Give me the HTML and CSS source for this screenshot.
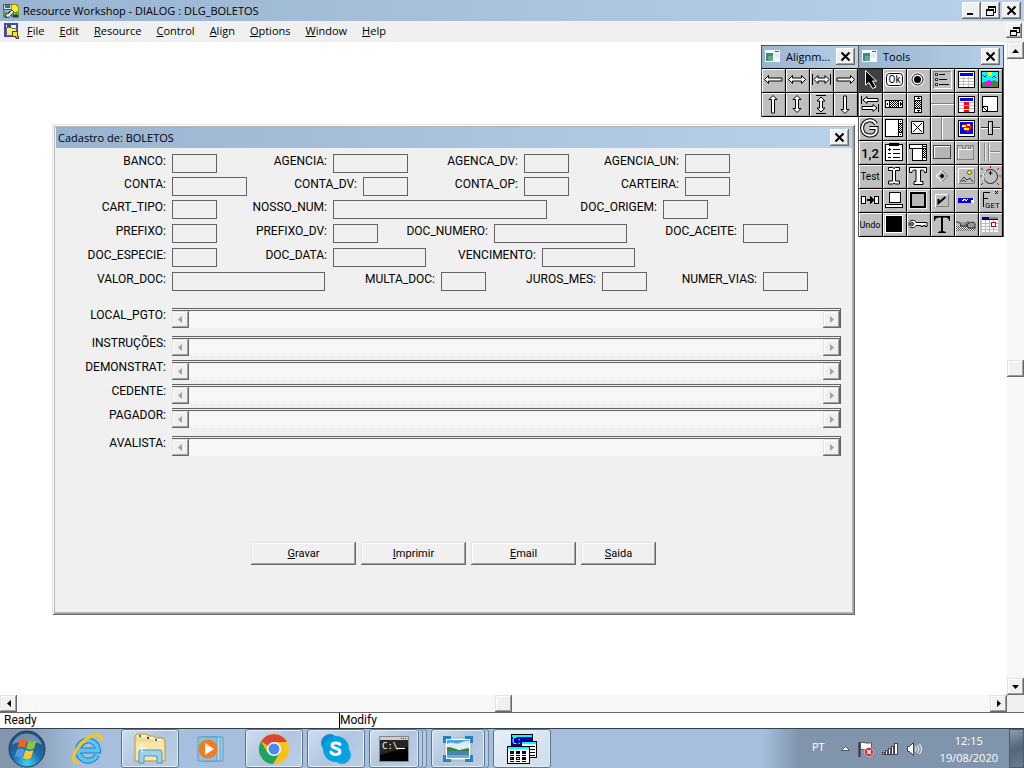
FILE: index.html
```html
<!DOCTYPE html>
<html lang="pt">
  <head>
    <meta charset="utf-8" />
    <meta name="viewport" content="width=device-width, initial-scale=1" />
    <title>Resource Workshop - DIALOG : DLG_BOLETOS</title>
    <link rel="stylesheet" href="styles.css">
  </head>
  <body>
    <header class="titlebar">
      <svg class="app-icon" width="16" height="16" viewBox="0 0 16 16" shape-rendering="crispEdges">
        <path d="M0 1h9v5H0z" fill="#ddd" stroke="#555"/><path d="M2 2h5v3H2z" fill="#0a8a8a"/>
        <path d="M8 1h5l2 3v4l-3 2-4-3z" fill="#ffef20" stroke="#998c00"/>
        <path d="M0 7l5 3 3-3 3 4 5-2v6H9l-2-3-3 3H0z" fill="#4a9c4a"/>
        <path d="M2 13l7-6 2 2-6 6z" fill="#e8e8e8" stroke="#444"/><path d="M10 12h5v2h-5z" fill="#333"/>
      </svg>
      <h1>Resource Workshop - DIALOG : DLG_BOLETOS</h1>
      <div class="window-buttons">
        <button class="win-btn" aria-label="Minimize"><svg width="13" height="11"><path d="M2 9h6" stroke="#000" stroke-width="2"/></svg></button>
        <button class="win-btn" aria-label="Restore"><svg width="13" height="11" shape-rendering="crispEdges"><path d="M4 1h7v6H9M4 1v3M4 2h7M2 4h7v6H2zM2 5h7" fill="none" stroke="#000"/></svg></button>
        <button class="win-btn win-close" aria-label="Close"><svg width="13" height="11"><path d="M2.500 1.500l8 8M10.500 1.500l-8 8" stroke="#000" stroke-width="2"/></svg></button>
      </div>
    </header>

    <nav class="menubar">
      <svg class="app-icon" width="16" height="16" viewBox="0 0 16 16" shape-rendering="crispEdges">
        <path d="M1 1h12v12H1z" fill="#fff" stroke="#4040e0" stroke-width="2"/>
        <path d="M2 4h5l1 1h4v7H2z" fill="#f5ee6a" stroke="#666"/><path d="M3 3h4" stroke="#080" stroke-width="2"/>
        <path d="M8 8h5v4l2 3-2 1-2-3-2 1z" fill="#ffe600" stroke="#444"/>
      </svg>
      <a href="#"><u>F</u>ile</a>
      <a href="#"><u>E</u>dit</a>
      <a href="#"><u>R</u>esource</a>
      <a href="#"><u>C</u>ontrol</a>
      <a href="#"><u>A</u>lign</a>
      <a href="#"><u>O</u>ptions</a>
      <a href="#"><u>W</u>indow</a>
      <a href="#"><u>H</u>elp</a>
      <button class="win-btn mdi-restore" aria-label="Restore window"><svg width="11" height="10" shape-rendering="crispEdges"><path d="M4 1h6v5H8M4 1v2M4 2h6M1 4h6v5H1zM1 5h6" fill="none" stroke="#000"/></svg></button>
    </nav>

    <main class="workspace">
      <div class="canvas">
        <section class="dialog">
          <div class="dialog-title">
            <h2>Cadastro de: BOLETOS</h2>
            <button class="win-btn win-close" aria-label="Close"><svg width="13" height="11"><path d="M2.500 1.500l8 8M10.500 1.500l-8 8" stroke="#000" stroke-width="2"/></svg></button>
          </div>
          <form class="dialog-form">
            <div class="row row-tight">
              <label for="banco">BANCO:</label><input id="banco" class="w-s">
              <label for="agencia">AGENCIA:</label><input id="agencia" class="w-m">
              <label for="agenca_dv">AGENCA_DV:</label><input id="agenca_dv" class="w-s">
              <label for="agencia_un">AGENCIA_UN:</label><input id="agencia_un" class="w-s">
            </div>
            <div class="row row-tight">
              <label for="conta">CONTA:</label><input id="conta" class="w-m">
              <label for="conta_dv">CONTA_DV:</label><input id="conta_dv" class="w-s">
              <label for="conta_op">CONTA_OP:</label><input id="conta_op" class="w-s">
              <label for="carteira">CARTEIRA:</label><input id="carteira" class="w-s">
            </div>
            <div class="row">
              <label for="cart_tipo">CART_TIPO:</label><input id="cart_tipo" class="w-s">
              <label for="nosso_num">NOSSO_NUM:</label><input id="nosso_num" class="w-xxl">
              <label for="doc_origem">DOC_ORIGEM:</label><input id="doc_origem" class="w-s">
            </div>
            <div class="row">
              <label for="prefixo">PREFIXO:</label><input id="prefixo" class="w-s">
              <label for="prefixo_dv">PREFIXO_DV:</label><input id="prefixo_dv" class="w-s">
              <label for="doc_numero">DOC_NUMERO:</label><input id="doc_numero" class="w-l">
              <label for="doc_aceite">DOC_ACEITE:</label><input id="doc_aceite" class="w-s">
            </div>
            <div class="row">
              <label for="doc_especie">DOC_ESPECIE:</label><input id="doc_especie" class="w-s">
              <label for="doc_data">DOC_DATA:</label><input id="doc_data" class="w-date">
              <label for="vencimento">VENCIMENTO:</label><input id="vencimento" class="w-date">
            </div>
            <div class="row">
              <label for="valor_doc">VALOR_DOC:</label><input id="valor_doc" class="w-xl">
              <label for="multa_doc">MULTA_DOC:</label><input id="multa_doc" class="w-s">
              <label for="juros_mes">JUROS_MES:</label><input id="juros_mes" class="w-s">
              <label for="numer_vias">NUMER_VIAS:</label><input id="numer_vias" class="w-s">
            </div>

            <div class="memos">
              <div class="memo-row memo-spaced">
                <label for="local_pgto">LOCAL_PGTO:</label>
                <div class="memo"><button type="button" class="sb-btn off" aria-label="Left"><svg width="5" height="7"><path d="M4 0v7L0 3.500z"/></svg></button><input id="local_pgto"><button type="button" class="sb-btn off" aria-label="Right"><svg width="5" height="7"><path d="M1 0v7L5 3.500z"/></svg></button></div>
              </div>
              <div class="memo-row">
                <label for="instrucoes">INSTRUÇÕES:</label>
                <div class="memo"><button type="button" class="sb-btn off" aria-label="Left"><svg width="5" height="7"><path d="M4 0v7L0 3.500z"/></svg></button><input id="instrucoes"><button type="button" class="sb-btn off" aria-label="Right"><svg width="5" height="7"><path d="M1 0v7L5 3.500z"/></svg></button></div>
              </div>
              <div class="memo-row">
                <label for="demonstrat">DEMONSTRAT:</label>
                <div class="memo"><button type="button" class="sb-btn off" aria-label="Left"><svg width="5" height="7"><path d="M4 0v7L0 3.500z"/></svg></button><input id="demonstrat"><button type="button" class="sb-btn off" aria-label="Right"><svg width="5" height="7"><path d="M1 0v7L5 3.500z"/></svg></button></div>
              </div>
              <div class="memo-row">
                <label for="cedente">CEDENTE:</label>
                <div class="memo"><button type="button" class="sb-btn off" aria-label="Left"><svg width="5" height="7"><path d="M4 0v7L0 3.500z"/></svg></button><input id="cedente"><button type="button" class="sb-btn off" aria-label="Right"><svg width="5" height="7"><path d="M1 0v7L5 3.500z"/></svg></button></div>
              </div>
              <div class="memo-row memo-spaced">
                <label for="pagador">PAGADOR:</label>
                <div class="memo"><button type="button" class="sb-btn off" aria-label="Left"><svg width="5" height="7"><path d="M4 0v7L0 3.500z"/></svg></button><input id="pagador"><button type="button" class="sb-btn off" aria-label="Right"><svg width="5" height="7"><path d="M1 0v7L5 3.500z"/></svg></button></div>
              </div>
              <div class="memo-row">
                <label for="avalista">AVALISTA:</label>
                <div class="memo"><button type="button" class="sb-btn off" aria-label="Left"><svg width="5" height="7"><path d="M4 0v7L0 3.500z"/></svg></button><input id="avalista"><button type="button" class="sb-btn off" aria-label="Right"><svg width="5" height="7"><path d="M1 0v7L5 3.500z"/></svg></button></div>
              </div>
            </div>

            <div class="actions">
              <button type="button" class="push"><span><u>G</u>ravar</span></button>
              <button type="button" class="push"><span><u>I</u>mprimir</span></button>
              <button type="button" class="push"><span><u>E</u>mail</span></button>
              <button type="button" class="push push-small"><span><u>S</u>aida</span></button>
            </div>
          </form>
        </section>

        <section class="palette palette-align">
          <div class="palette-title">
            <svg width="15" height="12" viewBox="0 0 15 12" shape-rendering="crispEdges"><path d="M0 0h15v12H0z" fill="#f8fbff"/><path d="M1 3h7v8H1z" fill="#3a8a8a"/><path d="M3 6h5v5H3z" fill="#5fae7a"/><path d="M9 3h5v5H9z" fill="#dcecf8"/><path d="M10 1h4v1h-4z" fill="#456"/></svg>
            <h2>Alignm...</h2>
            <button class="win-btn win-close" aria-label="Close"><svg width="13" height="11"><path d="M2.500 1.500l8 8M10.500 1.500l-8 8" stroke="#000" stroke-width="2"/></svg></button>
          </div>
          <div class="cells cells-4">
            <button aria-label="Left"><svg viewBox="0 0 24 24" class="arrow"><path d="M2.500 10.500l4-4v2.500H20v3H6.500v2.500z"/></svg></button>
            <button aria-label="Center horizontally"><svg viewBox="0 0 24 24" class="arrow"><path d="M2.500 10.500l4-4v2.500h9V6.500l4 4-4 4V12h-9v2.500z"/></svg></button>
            <button aria-label="Same width"><svg viewBox="0 0 24 24" class="arrow"><path d="M4 10.500l4-4v2.500h7V6.500l4 4-4 4V12H8v2.500zM2.500 5v11M20.500 5v11"/></svg></button>
            <button aria-label="Right"><svg viewBox="0 0 24 24" class="arrow"><path d="M20.500 10.500l-4-4v2.500H3v3h13.500v2.500z"/></svg></button>
            <button aria-label="Top"><svg viewBox="0 0 24 24" class="arrow"><path d="M11 2.500l4 4h-2.500V20h-3V6.500H7z"/></svg></button>
            <button aria-label="Center vertically"><svg viewBox="0 0 24 24" class="arrow"><path d="M11 2.500l4 4h-2.500v9H15l-4 4-4-4h2.500v-9H7z"/></svg></button>
            <button aria-label="Same height"><svg viewBox="0 0 24 24" class="arrow"><path d="M11 4l4 4h-2.500v7H15l-4 4-4-4h2.500V8H7zM6 2.500h10M6 20.500h10"/></svg></button>
            <button aria-label="Bottom"><svg viewBox="0 0 24 24" class="arrow"><path d="M11 20.500l4-4h-2.500V3h-3v13.500H7z"/></svg></button>
          </div>
        </section>

        <section class="palette palette-tools">
          <div class="palette-title">
            <svg width="15" height="12" viewBox="0 0 15 12" shape-rendering="crispEdges"><path d="M0 0h15v12H0z" fill="#f8fbff"/><path d="M1 3h7v8H1z" fill="#3a8a8a"/><path d="M3 6h5v5H3z" fill="#5fae7a"/><path d="M9 3h5v5H9z" fill="#dcecf8"/><path d="M10 1h4v1h-4z" fill="#456"/></svg>
            <h2>Tools</h2>
            <button class="win-btn win-close" aria-label="Close"><svg width="13" height="11"><path d="M2.500 1.500l8 8M10.500 1.500l-8 8" stroke="#000" stroke-width="2"/></svg></button>
          </div>
          <div class="cells cells-6">
            <button class="selected" aria-label="Select"><svg viewBox="0 0 24 24"><path d="M6.500 1.500v14.500l3.500-2.500 3.500 6 3.500-1.500-3.500-6h4z" fill="#000" stroke="#fff"/></svg></button>
            <button aria-label="Push button"><svg viewBox="0 0 24 24"><rect x="2" y="3" width="19" height="15" rx="4" fill="#fff"/><rect x="3.500" y="4.500" width="16" height="12" rx="3" fill="#fff" stroke="#000"/><text x="11.500" y="14" text-anchor="middle" font-size="10">Ok</text></svg></button>
            <button aria-label="Radio button"><svg viewBox="0 0 24 24"><circle cx="10.500" cy="10.500" r="7" fill="#fff"/><circle cx="10.500" cy="10.500" r="5.500" fill="#fff" stroke="#000"/><circle cx="10.500" cy="10.500" r="3.500"/></svg></button>
            <button aria-label="Radio group"><svg viewBox="0 0 24 24" class="px"><path d="M2.500 19V2.500H20" fill="none" stroke="#808080"/><path d="M3 19.500h17.500V2" fill="none" stroke="#fff"/><path d="M8 5.500h6M8 10.500h8M8 15.500h10" stroke="#000"/><path d="M4.500 4.500h2v2h-2zM4.500 9.500h2v2h-2zM4.500 14.500h2v2h-2z" fill="#fff" stroke="#333"/></svg></button>
            <button aria-label="Table"><svg viewBox="0 0 24 24" class="px"><path d="M3.500 2.500h16v16h-16z" fill="#fff" stroke="#000"/><path d="M5 4h13v3H5z" fill="#00f"/><path d="M4 9.500h15M4 12.500h15M4 15.500h15M8.500 8v10M13.500 8v10" stroke="#c0c0c0"/></svg></button>
            <button aria-label="Picture"><svg viewBox="0 0 24 24" class="px"><path d="M2.500 2.500h17v16h-17z" fill="#0ff" stroke="#000"/><path d="M3 14l4-2 4 1 4-2 4 2v5H3z" fill="#5a7a30"/><path d="M9 3h4v4H9z" fill="#ff0"/><path d="M7 14l3-4 3 4v2H7z" fill="#f0f"/><path d="M4 6l2 2 2-2M13 9l2-2 2 2" fill="none" stroke="#00f"/></svg></button>

            <button aria-label="Spin"><svg viewBox="0 0 24 24" class="arrow"><path d="M4 7l4-3.500V5.500h11v3H8v2zM2.500 3v8M18 15l-4-3.500v2H3v3h11v2zM19.500 11v8"/></svg></button>
            <button aria-label="Horizontal scroll bar"><svg viewBox="0 0 24 24" class="px"><path d="M2.500 7.500h17v7h-17z" fill="#fff" stroke="#000"/><path d="M7 8h8v6H7z" fill="url(#hatch)"/><path d="M6.500 8v6M15.500 8v6" stroke="#000"/><path d="M5 9v4l-2-2zM17 9v4l2-2z"/></svg></button>
            <button aria-label="Vertical scroll bar"><svg viewBox="0 0 24 24" class="px"><path d="M7.500 3.500h7v16h-7z" fill="#fff" stroke="#000"/><path d="M8 8h6v7H8z" fill="url(#hatch)"/><path d="M8 7.500h6M8 15.500h6" stroke="#000"/><path d="M9 6h4l-2-2zM9 17h4l-2 2z"/></svg></button>
            <button aria-label="Horizontal line"><svg viewBox="0 0 24 24" class="px"><path d="M0 10.500h23" stroke="#808080"/><path d="M0 11.500h23" stroke="#fff"/></svg></button>
            <button aria-label="Column table"><svg viewBox="0 0 24 24" class="px"><path d="M3.500 3.500h16v16h-16z" fill="#fff" stroke="#000"/><path d="M4 9.500h15M4 12.500h15M4 15.500h15" stroke="#c0c0c0"/><path d="M5 5h13v3H5z" fill="#00f"/><path d="M11.500 9v10" stroke="#f00" stroke-width="5" stroke-dasharray="3 1"/></svg></button>
            <button aria-label="Page"><svg viewBox="0 0 24 24" class="px"><path d="M3.500 3.500h15v15h-15z" fill="#fff" stroke="#000"/><path d="M3.500 13.500l5 5M3.500 13.500h5v5" fill="none" stroke="#000"/></svg></button>

            <button aria-label="Group"><svg viewBox="0 0 24 24"><path d="M17 7C15 4 12 3 9.500 3.500 1 5 1 17 9.500 18.500c4 .5 7-1.500 8-4V11h-7" fill="none" stroke="#000" stroke-width="4"/><path d="M17 7C15 4 12 3 9.500 3.500 1 5 1 17 9.500 18.500c4 .5 7-1.500 8-4V11h-7" fill="none" stroke="#fff" stroke-width="2"/></svg></button>
            <button aria-label="List box"><svg viewBox="0 0 24 24" class="px"><path d="M2.500 2.500h17v17h-17z" fill="#fff" stroke="#000"/><path d="M16 7h3v8h-3z" fill="url(#hatch)"/><path d="M15.500 3v16M16 6.500h3M16 15.500h3M17 4.500h1M17 17.500h1" stroke="#000"/></svg></button>
            <button aria-label="Check box"><svg viewBox="0 0 24 24"><path d="M4.500 4.500h12v12h-12z" fill="#fff" stroke="#000"/><path d="M6 6l9 9M15 6l-9 9" stroke="#000"/></svg></button>
            <button aria-label="Vertical line"><svg viewBox="0 0 24 24" class="px"><path d="M10.500 0v23" stroke="#808080"/><path d="M11.500 0v23" stroke="#fff"/></svg></button>
            <button aria-label="Custom grid"><svg viewBox="0 0 24 24" class="px"><path d="M3.500 3.500h16v16h-16z" fill="#fff" stroke="#000"/><path d="M5 5h13v12H5z" fill="#00f"/><path d="M8 7h7l2 3-5 6-6-6z" fill="#f00"/><path d="M7 8h4v2H7zM12 7h3v2h-3zM9 11h5v2H9z" fill="#ff0"/></svg></button>
            <button aria-label="Slider"><svg viewBox="0 0 24 24" class="px"><path d="M2 10.500h19" stroke="#333"/><path d="M2 11.500h19" stroke="#fff"/><path d="M9.500 4.500h4v13h-4z" fill="#c0c0c0" stroke="#000"/><path d="M10.500 5v12" stroke="#fff"/></svg></button>

            <button aria-label="Numbers"><svg viewBox="0 0 24 24"><text x="11" y="17" text-anchor="middle" font-size="13" font-weight="500">1,2</text></svg></button>
            <button aria-label="Check list"><svg viewBox="0 0 24 24" class="px"><path d="M2.500 3.500h17v16h-17z" fill="#fff" stroke="#000"/><path d="M6 2h10v3H6z"/><path d="M5 8.500h3M6.500 7v3M10 8.500h7M5 12.500h3M10 12.500h7M5 16.500h3M10 16.500h7" stroke="#000"/></svg></button>
            <button aria-label="Combo box"><svg viewBox="0 0 24 24" class="px"><path d="M2.500 3.500h17v4h-17zM5.500 7.500h14v12h-14z" fill="#fff" stroke="#000"/><path d="M16 8h3v8h-3z" fill="url(#hatch)"/><path d="M15.500 4v15M16 5.500h3M16 16.500h3" stroke="#000"/></svg></button>
            <button aria-label="Panel"><svg viewBox="0 0 24 24" class="px"><path d="M2 4h18v14H2z" fill="#404040"/><path d="M3 5h16v12H3z" fill="#fff"/><path d="M4 6h15v11H4z" fill="#b4b4b4"/></svg></button>
            <button aria-label="Tabs"><svg viewBox="0 0 24 24" class="px"><path d="M2.500 18.500v-14h5v3h3v-3h3v3h2v-3h3v14z" fill="#c0c0c0" stroke="#808080"/><path d="M3.500 17V8.500h14" fill="none" stroke="#fff"/></svg></button>
            <button aria-label="Outline"><svg viewBox="0 0 24 24" class="px"><path d="M5.500 2v18M9.500 2v18M10 10.500h11" stroke="#808080"/><path d="M6.500 2v18M10.500 2v18M10 11.500h11" stroke="#eee"/></svg></button>

            <button aria-label="Test"><svg viewBox="0 0 24 24"><text x="11" y="15" text-anchor="middle" font-size="10">Test</text></svg></button>
            <button aria-label="Edit text"><svg viewBox="0 0 24 24"><path d="M5.500 2.500h4l1.500 1 1.500-1h4v3h-4V16h4v3h-4l-1.500-1-1.500 1h-4v-3h4V5.500h-4z" fill="#fff" stroke="#000"/></svg></button>
            <button aria-label="Static text"><svg viewBox="0 0 24 24"><path d="M2.500 2.500h17v5h-2c0-2-1-2.500-4-2.500v11.500h2.500v3H7v-3h2V5c-3 0-4 .5-4 2.500H2.500z" fill="#fff" stroke="#000"/></svg></button>
            <button aria-label="Diamond"><svg viewBox="0 0 24 24"><path d="M11 5l6 6-6 6" fill="none" stroke="#808080"/><path d="M11 5l-6 6 6 6" fill="none" stroke="#fff"/><path d="M11 8.500l2.500 2.500-2.500 2.500L8.500 11z"/></svg></button>
            <button aria-label="Image"><svg viewBox="0 0 24 24"><path d="M3.500 19V3.500H19" fill="none" stroke="#fff"/><path d="M3.500 18.500h16V4" fill="none" stroke="#808080"/><path d="M5 17l4-5 3 3 3-2 3 4M7 17l2-2 2 2" fill="none" stroke="#333"/><circle cx="14.500" cy="7.500" r="2" fill="#ff0" stroke="#555"/></svg></button>
            <button aria-label="Knob"><svg viewBox="0 0 24 24"><circle cx="11.500" cy="11.500" r="7" fill="#c0c0c0" stroke="#222"/><path d="M5 15a7 7 0 0 1 2-9" fill="none" stroke="#fff"/><path d="M11.500 6v4M9.500 8h4" stroke="#000"/><path d="M2 3l2 2M11.500 1v2M20 3l-2 2M1 11h2M20 11h2M2 20l2-2M20 20l-2-2" stroke="#c00"/></svg></button>

            <button aria-label="Tab order"><svg viewBox="0 0 24 24" class="px"><path d="M2.500 7.500h4v7h-4zM15.500 7.500h4v7h-4z" fill="#fff" stroke="#000"/><path d="M8 11h6" stroke="#000" stroke-width="2"/><path d="M11 7v8l4-4z"/></svg></button>
            <button aria-label="Icon"><svg viewBox="0 0 24 24" class="px"><path d="M6.500 3.500h11v10h-11z" fill="#fff" stroke="#000"/><path d="M2.500 15.500h17v3h-17z" fill="#fff" stroke="#000"/></svg></button>
            <button aria-label="Frame"><svg viewBox="0 0 24 24" class="px"><path d="M2 2h18v18H2z" fill="#eee"/><path d="M4 4h14v14H4z" fill="#b8b8b8" stroke="#000" stroke-width="2"/></svg></button>
            <button aria-label="Check button"><svg viewBox="0 0 24 24"><path d="M4.500 18V5.500H18" fill="none" stroke="#fff"/><path d="M5 17.500h12.500V5" fill="none" stroke="#808080"/><path d="M7.500 10v4l7-6" fill="none" stroke="#000" stroke-width="2"/></svg></button>
            <button aria-label="Progress"><svg viewBox="0 0 24 24" class="px"><path d="M3 9h16v5H3z" fill="#fff"/><path d="M3 9h12v5H3z" fill="#00d"/><path d="M15 9h3v2h-2v3h-1z" fill="#00d"/><path d="M7 12l3-2 1 2 2-2" stroke="#fff" fill="none"/></svg></button>
            <button aria-label="Get field"><svg viewBox="0 0 24 24"><path d="M4.500 18V3.500H11M4.500 9.500H9" fill="none" stroke="#000"/><text x="6" y="19" font-size="8">GET</text><path d="M16 2l3 3M19 2l-3 3" stroke="#000"/></svg></button>

            <button aria-label="Undo"><svg viewBox="0 0 24 24"><text x="11" y="15" text-anchor="middle" font-size="9">Undo</text></svg></button>
            <button aria-label="Black rectangle"><svg viewBox="0 0 24 24" class="px"><path d="M2 2h18v18H2z" fill="#fff"/><path d="M3 3h16v16H3z"/></svg></button>
            <button aria-label="Key"><svg viewBox="0 0 24 24"><path d="M9 9.500h11v4h-2v-1h-2v1h-2v-1H9c-1 3-7 3-7-1.500s6-4.500 7-2z" fill="#fff" stroke="#000"/><circle cx="5" cy="11" r="1.500" fill="#c0c0c0" stroke="#000"/></svg></button>
            <button aria-label="Text"><svg viewBox="0 0 24 24"><path d="M3 3h16v5h-1c0-3-2-3.500-6-3.500V18l3 1v1H7v-1l3-1V4.500C6 4.500 4 5 4 8H3z"/></svg></button>
            <button aria-label="View"><svg viewBox="0 0 24 24"><path d="M1 13h20v5H1z" fill="url(#hatch)" opacity=".5"/><path d="M1 9c4 0 4 1 5 4h5c1-3 0-4 3-4M12 13c0-4 8-5 8-2v4h-6z" fill="#999" stroke="#222"/></svg></button>
            <button aria-label="Calendar"><svg viewBox="0 0 24 24" class="px"><path d="M3 4h16v15H3z" fill="#fff"/><path d="M3 4h16v3H3z" fill="#000080"/><path d="M10 4h9v2h-9z" fill="#888"/><path d="M3 10.500h16M3 13.500h16M3 16.500h16M6.500 7v12M10.500 7v12M14.500 7v12" stroke="#bbb"/><path d="M12.500 9.500h4v4h-4z" fill="#fff" stroke="#c00"/></svg></button>
          </div>
        </section>
      </div>

      <div class="vscroll">
        <button class="sb-btn" aria-label="Scroll up"><svg width="7" height="4"><path d="M0 4h7L3.500 0z"/></svg></button>
        <div class="track"><span class="thumb"></span></div>
        <button class="sb-btn" aria-label="Scroll down"><svg width="7" height="4"><path d="M0 0h7L3.500 4z"/></svg></button>
      </div>
      <div class="hscroll">
        <button class="sb-btn" aria-label="Scroll left"><svg width="4" height="7"><path d="M4 0v7L0 3.500z"/></svg></button>
        <div class="track"><span class="thumb"></span></div>
        <button class="sb-btn" aria-label="Scroll right"><svg width="4" height="7"><path d="M0 0v7l4-3.500z"/></svg></button>
      </div>
    </main>

    <div class="statusbar">
      <span class="status-main">Ready</span>
      <span class="status-mode">Modify</span>
    </div>

    <footer class="taskbar">
      <button class="start" aria-label="Start">
        <svg width="38" height="38" viewBox="0 0 38 38">
          <circle cx="19" cy="19" r="18" fill="url(#orb)" stroke="#1c3f63"/>
          <path d="M4 15a15.500 15.500 0 0 1 30 0c-8-5-22-5-30 0z" fill="#fff" opacity=".35"/>
          <path d="M12 10c3-2 5-1.500 7.500 0L17 18c-3-1.500-5-1.500-7.500 0z" fill="#f0642a"/>
          <path d="M20.500 10.500c3 1.500 5 1.500 8 0L26 18.500c-3 1.500-5 1.500-8 0z" fill="#8cc63f"/>
          <path d="M9 19.500c3-1.500 5-1.500 7.500 0L14 28c-3-2-5-2-7.500-.5z" fill="#4a9de0"/>
          <path d="M17.500 20c3 1.500 5 1.500 8 0L23 28c-3 1.500-5 1.500-8 0z" fill="#fcc92c"/>
        </svg>
      </button>
      <button class="task" aria-label="Internet Explorer">
        <svg width="32" height="32" viewBox="0 0 32 32">
          <path d="M8 17.500h18a10 10 0 1 0-1 4.500" fill="none" stroke="#1b80c4" stroke-width="6"/>
          <path d="M8 17.500h18a10 10 0 1 0-1 4.500" fill="none" stroke="#5cc4f2" stroke-width="4"/>
          <path d="M7 29C-2 32 1 19 9 11 17 2 31-3 29 8" fill="none" stroke="#f9c51c" stroke-width="3"/>
        </svg>
      </button>
      <button class="task open" aria-label="Windows Explorer">
        <svg width="34" height="32" viewBox="0 0 34 32">
          <path d="M2 3l2-2h10l2 2h5l2 2h7l2 2v21H2z" fill="#f5dc8c" stroke="#b99b45"/>
          <path d="M5 2h7v2H5zM13 4h7v2h-7zM21 6h7v2h-7z" fill="#fff"/><path d="M6 2h2v2H6z" fill="#0a0"/><path d="M14 4h2v2h-2z" fill="#d00"/><path d="M22 6h2v2h-2z" fill="#08d"/>
          <path d="M3 9h28v18H3z" fill="#f9e8a8"/>
          <path d="M6 30V19q0-2 2-2h19q2 0 2 2v11h-5v-7H11v7z" fill="#9bd3f0" stroke="#4a94c0"/>
          <path d="M9 11v8M5 15h8" stroke="#fff"/>
        </svg>
      </button>
      <button class="task" aria-label="Media Player">
        <svg width="32" height="28" viewBox="0 0 32 28">
          <path d="M9 2h18v24H9z" fill="#9fcbe4" stroke="#5b9ec4"/><path d="M6 2h18v24H6z" fill="#b8dbee" stroke="#5b9ec4"/><path d="M2 2h19v24H2z" fill="#8dc1df" stroke="#5b9ec4"/>
          <circle cx="12" cy="14" r="9.500" fill="#f57a1c"/><path d="M9 8v12l9-6z" fill="#fff"/>
        </svg>
      </button>
      <button class="task open" aria-label="Chrome">
        <svg width="30" height="30" viewBox="0 0 30 30">
          <circle cx="15" cy="15" r="15" fill="#fbc116"/>
          <path d="M15 15L2 7.500A15 15 0 0 1 28 8H15z" fill="#db4437"/>
          <path d="M2 7.500L8.900 19 15 22l-2.500 8A15 15 0 0 1 2 7.500z" fill="#1da462"/><path d="M21 18.500L14 30h-1.500L15 20z" fill="#1da462"/>
          <circle cx="15" cy="15" r="7" fill="#fff"/><circle cx="15" cy="15" r="5.500" fill="#4a89f3"/>
        </svg>
      </button>
      <button class="task open" aria-label="Skype">
        <svg width="30" height="30" viewBox="0 0 30 30">
          <circle cx="9" cy="9" r="9" fill="#0d8ccd"/><circle cx="21" cy="21" r="9" fill="#14a0e0"/><circle cx="15" cy="15" r="13" fill="#00a2e4"/>
          <path d="M19 10.500c-1-2-8-2.500-8 1s8 2 8 6-8 3.500-9 .5" fill="none" stroke="#fff" stroke-width="3" stroke-linecap="round"/>
        </svg>
      </button>
      <div class="stack">
        <button class="task open" aria-label="Command prompt">
          <svg width="30" height="26" viewBox="0 0 30 26">
            <path d="M.5.500h29v25H.5z" fill="#000" stroke="#888"/><path d="M1 1h28v3H1z" fill="#ccc"/><path d="M22 2.500h6" stroke="#555" stroke-dasharray="1 1"/>
            <path d="M1 4h28v7L1 19z" fill="#fff" opacity=".15"/>
            <text x="3" y="13" class="mono" font-size="9" fill="#fff">C:\</text><path d="M18 12.500h8" stroke="#fff"/>
          </svg>
        </button>
        <i></i><i></i>
      </div>
      <div class="stack">
        <button class="task open" aria-label="Image viewer">
          <svg width="30" height="26" viewBox="0 0 30 26">
            <path d="M2 2h26v22H2z" fill="#fff" stroke="#9ab"/>
            <path d="M4 4h22v9H4z" fill="#4fa3e0"/>
            <path d="M4 8c5-3 8 1 13-1s6-2 9-2v8H4z" fill="#d8eefb"/><path d="M4 11c5 0 8 2 12 3l10-2v4H4z" fill="#3c7d4c"/><path d="M4 15h22v7H4z" fill="#4586b0"/><path d="M4 19h22v3H4z" fill="#75aac9"/>
            <path d="M1.500 7V1.500H8M22 1.500h6.500V7M28.500 19v5.500H22M8 24.500H1.500V19" fill="none" stroke="#2d7fc1" stroke-width="3"/>
          </svg>
        </button>
        <i></i>
      </div>
      <button class="task open active" aria-label="Resource Workshop">
        <svg width="32" height="32" viewBox="0 0 32 32" shape-rendering="crispEdges">
          <path d="M5.500 1.500h21v14h-21z" fill="#0000a8" stroke="#000"/><path d="M6 2h20v2H6z" fill="#0ff"/><text x="6" y="11" class="mono" font-size="8" fill="#fff">C:</text>
          <path d="M15.500 8.500h15v16h-15z" fill="#fff" stroke="#000"/><path d="M16 9h14v2H16z" fill="#0ff"/><path d="M24 13.500h5M24 16.500h5M24 19.500h5M24 22.500h5" stroke="#000"/>
          <path d="M1.500 13.500h22v17h-22z" fill="#fff" stroke="#000"/><path d="M2 14h21v2H2z" fill="#0ff"/>
          <path d="M4 18h4v3H4zM10 18h4v3h-4zM16 18h4v3h-4zM4 24h4v3H4zM10 24h4v3h-4zM16 24h4v3h-4z"/><path d="M5 19h1v1H5zM17 19h2v1h-2z" fill="#00f"/><path d="M5 25h1v1H5z" fill="#f0f"/><path d="M11 25h2v1h-2z" fill="#ff0"/>
          <path d="M4 22.500h4M10 22.500h4M16 22.500h4M4 28.500h4M10 28.500h4M16 28.500h4" stroke="#000"/>
        </svg>
      </button>

      <div class="tray">
        <span class="lang">PT</span>
        <svg width="9" height="5"><path d="M.5 4.500h8l-4-4z" fill="#fff" stroke="#556"/></svg>
        <svg width="16" height="16" viewBox="0 0 16 16"><path d="M1.500 1v15" stroke="#333" stroke-width="2"/><path d="M2.500 1.500c4-1 6 2 11 0v7c-5 2-7-1-11 0z" fill="#fff" stroke="#556"/><circle cx="11" cy="11" r="4.500" fill="#d8232a" stroke="#fff" stroke-width=".5"/><path d="M9 9l4 4M13 9l-4 4" stroke="#fff" stroke-width="1.500"/></svg>
        <svg width="16" height="12" viewBox="0 0 16 12" shape-rendering="crispEdges"><path d="M0 9h3v3H0zM3 7h3v5H3zM6 5h3v7H6zM9 3h3v9H9zM12 0h4v12h-4z" fill="#445"/><path d="M1 10h1v1H1zM4 8h1v3H4zM7 6h1v5H7zM10 4h1v7h-1zM13 1h2v10h-2z" fill="#fff"/></svg>
        <svg width="16" height="16" viewBox="0 0 16 16"><path d="M1.500 5.500h2l4-4v13l-4-4h-2z" fill="#fff" stroke="#445"/><path d="M9.500 5.500q1.500 2.500 0 5M11.500 4q3 4 0 8M13.500 3q4 5 0 10" fill="none" stroke="#fff"/></svg>
        <div class="clock"><time>12:15</time><span>19/08/2020</span></div>
        <button class="show-desktop" aria-label="Show desktop"></button>
      </div>
    </footer>

    <svg width="0" height="0" class="defs">
      <defs>
        <pattern id="hatch" width="2" height="2" patternUnits="userSpaceOnUse"><path d="M0 0h2v2H0z" fill="#fff"/><path d="M0 0h1v1H0zM1 1h1v1H1z"/></pattern>
        <radialGradient id="orb" cx="50%" cy="90%" r="80%"><stop offset="0" stop-color="#3fd0f5"/><stop offset=".5" stop-color="#1e6ea8"/><stop offset="1" stop-color="#24507c"/></radialGradient>
      </defs>
    </svg>
  </body>
</html>
```
FILE: styles.css
```css
* {
  margin: 0;
  padding: 0;
  box-sizing: border-box;
}

body {
  min-height: 100vh;
  display: flex;
  flex-direction: column;
  background: #fff;
  color: #000;
  font-family: "Open Sans", "Noto Sans", sans-serif;
  font-size: 11px;
}

button,
input {
  font: inherit;
  color: inherit;
  border: 0;
  border-radius: 0;
}

svg {
  display: block;
  flex: none;
}

h1,
h2 {
  font-size: 11px;
  font-weight: 400;
  white-space: nowrap;
}

.defs {
  position: absolute;
}

.mono {
  font-family: "DejaVu Sans Mono", monospace;
}

/* Title bar and menu */

.titlebar {
  display: flex;
  align-items: center;
  height: 21px;
  padding: 0 3px;
  gap: 4px;
  background: linear-gradient(90deg, #99b4d1, #b9d1ea);
}

.window-buttons {
  display: flex;
  margin-left: auto;
}

.win-btn {
  display: flex;
  align-items: center;
  justify-content: center;
  width: 19px;
  height: 17px;
  background: #f0f0f0;
  box-shadow: inset -1px -1px #696969, inset 1px 1px #fff, inset -2px -2px #a0a0a0;
}

.window-buttons .win-close {
  margin-left: 2px;
}

.menubar {
  display: flex;
  align-items: center;
  height: 21px;
  padding: 0 2px 2px 4px;
  gap: 15px;
  background: #f0f0f0;
}

.menubar .app-icon {
  margin-right: -8px;
}

.menubar a {
  color: #000;
  text-decoration: none;
}

.mdi-restore {
  width: 16px;
  height: 15px;
  margin-left: auto;
}

/* Work area */

.workspace {
  flex: 1;
  display: grid;
  grid-template-columns: 1fr 17px;
  grid-template-rows: 1fr 17px;
  background: #f0f0f0;
}

.canvas {
  position: relative;
  min-height: 600px;
  background: #fff;
}

.vscroll,
.hscroll {
  display: flex;
}

.vscroll {
  flex-direction: column;
}

.track {
  flex: 1;
  display: flex;
  align-items: center;
  justify-content: center;
}

.track,
.memo input {
  background: repeating-conic-gradient(#fff 0 25%, #f0f0f0 0 50%) 0 0 / 2px 2px;
}

.thumb,
.sb-btn {
  flex: none;
  width: 17px;
  height: 17px;
  background: #f0f0f0;
  box-shadow: inset -1px -1px #696969, inset 1px 1px #e3e3e3, inset -2px -2px #a0a0a0, inset 2px 2px #fff;
}

.sb-btn {
  display: flex;
  align-items: center;
  justify-content: center;
}

.sb-btn.off svg {
  fill: #a0a0a0;
}

/* Dialog being edited */

.dialog {
  position: absolute;
  left: 52px;
  top: 82px;
  width: 803px;
  height: 491px;
  padding: 3px;
  background: #f0f0f0;
  box-shadow: inset 1px 1px #e3e3e3, inset -1px -1px #696969, inset 2px 2px #fff, inset -2px -2px #a0a0a0, inset 3px 3px #b4b4b4, inset -3px -3px #b4b4b4;
}

.dialog-title {
  display: flex;
  align-items: center;
  justify-content: space-between;
  height: 21px;
  margin-left: 1px;
  padding: 0 3px 0 2px;
  background: linear-gradient(90deg, #99b4d1, #b9d1ea);
}

.dialog-form {
  padding: 6px 11px 0 1px;
  font-family: Roboto, sans-serif;
}

.row,
.memo-row {
  display: flex;
  align-items: flex-start;
  margin-bottom: 5px;
}

.row-tight {
  margin-bottom: 4px;
}

.dialog-form label {
  flex: none;
  width: 116px;
  padding-right: 6px;
  font-size: 12px;
  line-height: 14px;
  text-align: right;
}

.row input {
  height: 19px;
  border: 1px solid #646464;
  background: #f0f0f0;
}

.w-s {
  width: 45px;
}

.w-m {
  width: 75px;
}

.w-date {
  width: 93px;
}

.w-l {
  width: 133px;
}

.w-xl {
  width: 153px;
}

.w-xxl {
  width: 214px;
}

.memos {
  margin-top: 17px;
}

.memo-row {
  margin-bottom: 4px;
}

.memo-spaced {
  margin-bottom: 8px;
}

.memo {
  flex: 1;
  display: flex;
  border-top: 3px double #646464;
  border-right: 1px solid #646464;
}

.memo input {
  flex: 1;
  min-width: 0;
  height: 17px;
}

.actions {
  display: flex;
  gap: 5px;
  padding: 82px 0 0 195px;
}

.push {
  width: 105px;
  height: 23px;
  background: #f0f0f0;
  box-shadow: inset -1px -1px #696969, inset 1px 1px #e3e3e3, inset -2px -2px #a0a0a0, inset 2px 2px #fff;
}

.push-small {
  width: 75px;
}

/* Floating palettes */

.palette {
  position: absolute;
  top: 3px;
  border: 1px solid #555;
  border-bottom: 0;
}

.palette-align {
  left: 761px;
  border-right: 0;
}

.palette-tools {
  left: 858px;
}

.palette-title {
  display: flex;
  align-items: center;
  gap: 6px;
  height: 23px;
  padding: 0 3px 2px;
  border-bottom: 1px solid #000;
  background: linear-gradient(90deg, #99b4d1, #b9d1ea);
}

.palette-title .win-btn {
  margin-left: auto;
}

.cells {
  display: grid;
  grid-template-columns: repeat(4, 24px);
}

.cells-6 {
  grid-template-columns: repeat(6, 24px);
}

.cells button {
  height: 24px;
  background: #c0c0c0;
  box-shadow: inset -1px -1px #000, inset 1px 1px #fff, inset -2px -2px #a8a8a8;
}

.cells button.selected {
  background: #404040;
  box-shadow: inset -1px -1px #000;
}

.cells svg {
  width: 24px;
  height: 24px;
  font-family: Roboto, sans-serif;
}

.arrow path {
  fill: #fff;
  stroke: #000;
}

.px {
  shape-rendering: crispEdges;
}

/* Status bar */

.statusbar {
  display: flex;
  height: 16px;
  border-top: 1px solid #696969;
  font-family: Roboto, sans-serif;
  font-size: 12px;
  line-height: 15px;
}

.status-main {
  width: 339px;
  padding-left: 4px;
}

.status-mode {
  flex: 1;
  border-left: 1px solid #000;
}

/* Taskbar */

.taskbar {
  display: flex;
  align-items: stretch;
  gap: 4px;
  height: 40px;
  border-top: 1px solid #31404f;
  background: linear-gradient(90deg, #8296ae 0, #8296ae 20px, #a5bfdc 80px, #a5bfdc calc(100% - 262px), #8094ac calc(100% - 225px));
}

.start {
  display: flex;
  align-items: center;
  width: 55px;
  padding-left: 8px;
  background: none;
}

.task {
  display: flex;
  align-items: center;
  justify-content: center;
  width: 58px;
  background: none;
}

.task.open {
  border: 1px solid #5d7590;
  border-radius: 3px;
  background: linear-gradient(135deg, #cfdeee, #b0c6df 50%, #bcd0e6);
  box-shadow: inset 0 0 0 1px #e2ecf6;
}

.task.active {
  background: linear-gradient(135deg, #e6eef7, #cfdded);
}

.stack {
  display: flex;
  width: 58px;
}

.stack .task {
  flex: 1;
}

.stack i {
  width: 4px;
  border: 1px solid #6d87a5;
  border-left: 0;
  border-radius: 0 3px 3px 0;
  background: #b5cae1;
}

.tray {
  display: flex;
  align-items: center;
  gap: 8px;
  margin-left: auto;
  color: #fff;
}

.lang {
  margin-right: 8px;
  padding-bottom: 5px;
}

.clock {
  display: flex;
  flex-direction: column;
  align-items: center;
  margin: 0 3px 0 10px;
  line-height: 17px;
}

.show-desktop {
  align-self: stretch;
  width: 15px;
  border: 1px solid #4d5d70;
  background: linear-gradient(160deg, #8e9cae, #55657a 50%, #6d7d91);
}
```
